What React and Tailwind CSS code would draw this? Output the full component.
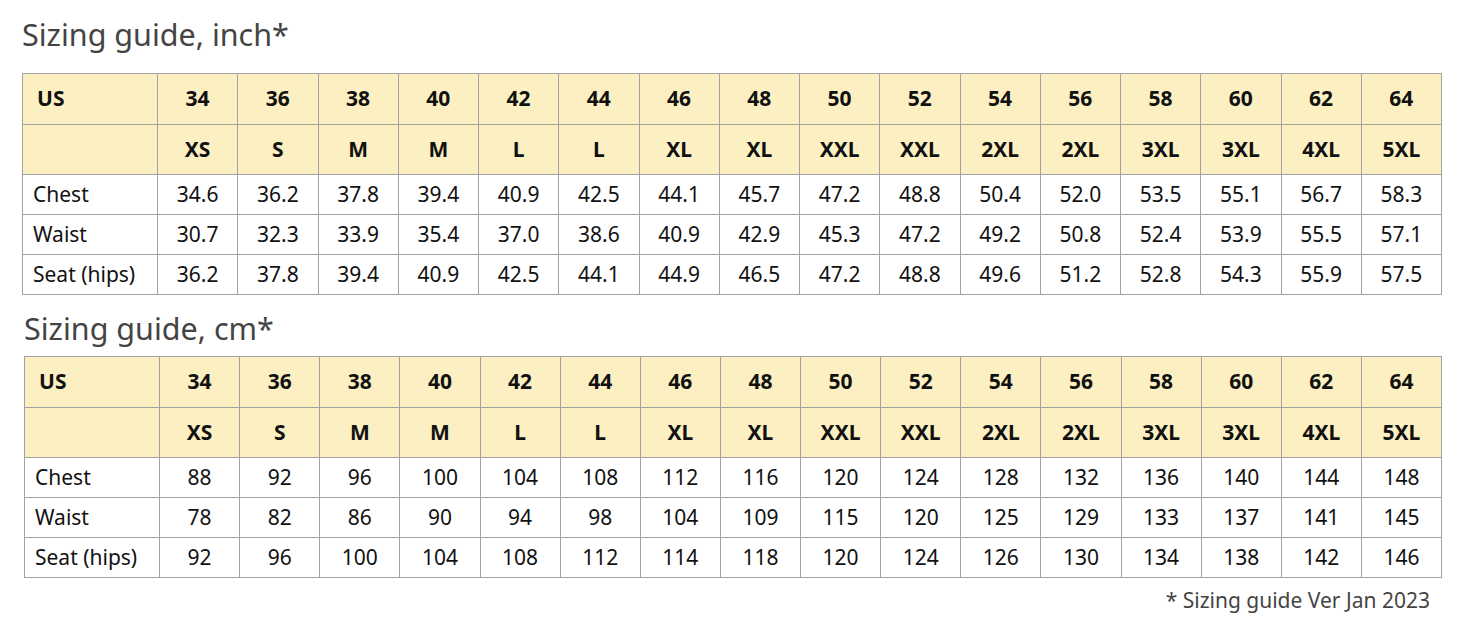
const SIZES = ["34", "36", "38", "40", "42", "44", "46", "48", "50", "52", "54", "56", "58", "60", "62", "64"];
const LETTERS = ["XS", "S", "M", "M", "L", "L", "XL", "XL", "XXL", "XXL", "2XL", "2XL", "3XL", "3XL", "4XL", "5XL"];

const inchRows = [
  ["Chest", ["34.6", "36.2", "37.8", "39.4", "40.9", "42.5", "44.1", "45.7", "47.2", "48.8", "50.4", "52.0", "53.5", "55.1", "56.7", "58.3"]],
  ["Waist", ["30.7", "32.3", "33.9", "35.4", "37.0", "38.6", "40.9", "42.9", "45.3", "47.2", "49.2", "50.8", "52.4", "53.9", "55.5", "57.1"]],
  ["Seat (hips)", ["36.2", "37.8", "39.4", "40.9", "42.5", "44.1", "44.9", "46.5", "47.2", "48.8", "49.6", "51.2", "52.8", "54.3", "55.9", "57.5"]],
];

const cmRows = [
  ["Chest", ["88", "92", "96", "100", "104", "108", "112", "116", "120", "124", "128", "132", "136", "140", "144", "148"]],
  ["Waist", ["78", "82", "86", "90", "94", "98", "104", "109", "115", "120", "125", "129", "133", "137", "141", "145"]],
  ["Seat (hips)", ["92", "96", "100", "104", "108", "112", "114", "118", "120", "124", "126", "130", "134", "138", "142", "146"]],
];

const cell = "border border-[#a2a2a2] text-center";

const SizeTable = ({ rows, className }) => (
  <table className={`table-fixed border-collapse text-[21px] text-[#111] ${className}`}>
    <colgroup>
      <col className="w-[135px]" />
      {SIZES.map((s) => (
        <col key={s} />
      ))}
    </colgroup>
    <thead className="bg-[#fcefc1]">
      <tr className="h-[51px]">
        <th className="border border-[#a2a2a2] pl-[14px] text-left font-bold">US</th>
        {SIZES.map((s) => (
          <th key={s} className={`${cell} font-bold`}>{s}</th>
        ))}
      </tr>
      <tr className="h-[50px]">
        <th className="border border-[#a2a2a2]"></th>
        {LETTERS.map((s, i) => (
          <th key={i} className={`${cell} font-bold`}>{s}</th>
        ))}
      </tr>
    </thead>
    <tbody>
      {rows.map(([label, vals]) => (
        <tr key={label} className="h-[40px]">
          <td className="border border-[#a2a2a2] pl-[10px] text-left">{label}</td>
          {vals.map((v, i) => (
            <td key={i} className={cell}>{v}</td>
          ))}
        </tr>
      ))}
    </tbody>
  </table>
);

export default function App() {
  return (
    <div className="w-[1468px] h-[630px] bg-white font-['Noto_Sans',sans-serif]">
      <h2 className="pt-[14px] pl-[22px] text-[30.5px] leading-[40px] text-[#444] mb-[19px]">Sizing guide, inch*</h2>
      <SizeTable rows={inchRows} className="ml-[22px] w-[1420px]" />

      <h2 className="mt-[13px] pl-[24px] text-[30.5px] leading-[40px] text-[#444] mb-[8px]">Sizing guide, cm*</h2>
      <SizeTable rows={cmRows} className="ml-[24px] w-[1418px]" />

      <p className="mt-[8px] pr-[38px] text-right text-[21px] leading-[28px] text-[#444]">* Sizing guide Ver Jan 2023</p>
    </div>
  );
}
